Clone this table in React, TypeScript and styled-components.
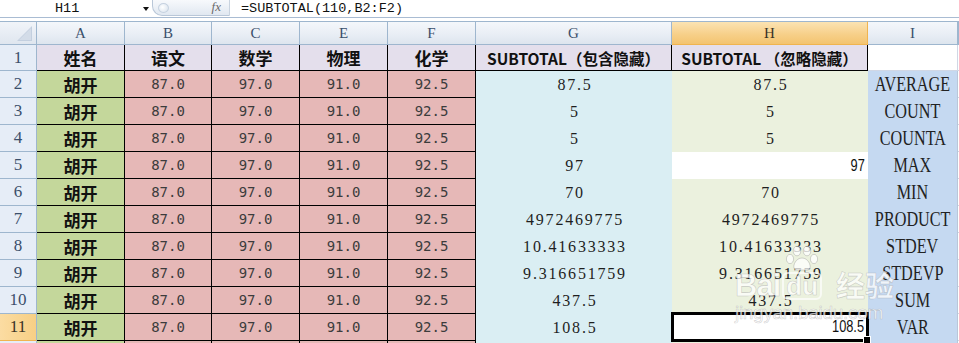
import React from "react"
import styled, { createGlobalStyle } from "styled-components"

const GlobalStyle = createGlobalStyle`
  html, body {
    margin: 0;
    padding: 0;
    background: #fff;
    overflow: hidden;
  }
  body {
    font-family: "Liberation Sans", Arial, sans-serif;
  }
`

const HEAD_BORDER = "#9eb6ce"
const CJK = `"Noto Sans CJK SC", "Noto Sans", sans-serif`
const SERIF = `"Liberation Serif", "Times New Roman", serif`

const Page = styled.div`
  position: relative;
  width: 959px;
  height: 343px;
  overflow: hidden;
  background: #fff;
`

// ---------- formula bar ----------
const FormulaBar = styled.div`
  display: flex;
  align-items: center;
  height: 17px;
  border-bottom: 1px solid #a9bcd3;
  font-family: "Liberation Mono", "Courier New", monospace;
  font-size: 13.5px;
  color: #111;
`

const NameBox = styled.div`
  display: flex;
  align-items: center;
  justify-content: space-between;
  width: 152px;
  padding-left: 55px;
  padding-right: 3px;
  box-sizing: border-box;
`

const Arrow = styled.span`
  width: 0;
  height: 0;
  border-left: 3.5px solid transparent;
  border-right: 3.5px solid transparent;
  border-top: 4px solid #111;
  margin-top: 1px;
`

const FxPill = styled.div`
  position: relative;
  display: flex;
  align-items: center;
  justify-content: flex-end;
  width: 78px;
  height: 17px;
  margin-top: -3px;
  padding-right: 8px;
  box-sizing: border-box;
  border: 1px solid #b9c7d8;
  border-right: 1px solid #c9d3df;
  border-radius: 0 0 0 10px;
  background: linear-gradient(#f7f9fc, #e1e8f1);
`

const Gloss = styled.span`
  position: absolute;
  left: 5px;
  top: 3px;
  width: 9px;
  height: 8px;
  border-radius: 50%;
  background: radial-gradient(circle at 40% 40%, #fff, #d6e0ec);
  border: 1px solid #c6d2e0;
`

const Fx = styled.span`
  font-family: ${SERIF};
  font-style: italic;
  font-size: 13px;
  color: #6a6a6a;
`

const Formula = styled.div`
  padding-left: 11px;
`

const Spacer = styled.div`
  height: 3px;
`

// ---------- sheet ----------
const Sheet = styled.div`
  display: grid;
  grid-template-columns: 37px 88px 87px 88px 88px 88px 196px 196px 90px 1fr;
  grid-template-rows: 24px 26px;
  grid-auto-rows: 27px;
`

const Corner = styled.div`
  display: flex;
  align-items: flex-end;
  justify-content: flex-end;
  padding: 0 4px 3px 0;
  box-sizing: border-box;
  background: linear-gradient(#f1f4f9, #dfe6ef);
  border-top: 1px solid ${HEAD_BORDER};
  border-right: 1px solid ${HEAD_BORDER};
  border-bottom: 1px solid ${HEAD_BORDER};
`

const ColHead = styled.div<{ $active?: boolean }>`
  display: flex;
  align-items: center;
  justify-content: center;
  box-sizing: border-box;
  border-top: 1px solid ${HEAD_BORDER};
  border-right: 1px solid ${(p) => (p.$active ? "#f0b44f" : HEAD_BORDER)};
  border-bottom: 1px solid ${(p) => (p.$active ? "#f0b44f" : HEAD_BORDER)};
  background: ${(p) =>
    p.$active
      ? "linear-gradient(#fbe3b3, #f7d08a 55%, #f3c470)"
      : "linear-gradient(#f4f7fb, #e9eef5 55%, #dde5ee)"};
  font-family: ${SERIF};
  font-size: 15px;
  color: ${(p) => (p.$active ? "#3a3326" : "#3b4f6b")};
`

const RowHead = styled.div<{ $active?: boolean }>`
  display: flex;
  align-items: center;
  justify-content: center;
  box-sizing: border-box;
  border-right: 1px solid ${HEAD_BORDER};
  border-bottom: 1px solid ${(p) => (p.$active ? "#f0b44f" : HEAD_BORDER)};
  background: ${(p) =>
    p.$active ? "linear-gradient(90deg, #fbdca2, #f7cf85)" : "#e6edf7"};
  font-family: ${SERIF};
  font-size: 17px;
  color: ${(p) => (p.$active ? "#3a3326" : "#3b4f6b")};
`

const TitleCell = styled.div<{ $small?: boolean }>`
  display: flex;
  align-items: center;
  justify-content: center;
  box-sizing: border-box;
  background: #e4dfec;
  border-right: 1px solid #000;
  border-bottom: 1px solid #000;
  font-family: ${CJK};
  font-weight: 700;
  font-size: ${(p) => (p.$small ? "15.5px" : "17px")};
  color: #111;
  white-space: nowrap;
`

const BlankCell = styled.div`
  box-sizing: border-box;
  background: #fff;
  border-right: 1px solid #d0d7e5;
  border-bottom: 1px solid #d0d7e5;
`

const NameCell = styled.div`
  display: flex;
  align-items: center;
  justify-content: center;
  box-sizing: border-box;
  background: #c4d79b;
  border-right: 1px solid #000;
  border-bottom: 1px solid #000;
  font-family: ${CJK};
  font-weight: 700;
  font-size: 17px;
  color: #111;
`

const ScoreCell = styled.div`
  display: flex;
  align-items: center;
  justify-content: center;
  box-sizing: border-box;
  background: #e6b8b7;
  border-right: 1px solid #000;
  border-bottom: 1px solid #000;
  font-family: "DejaVu Sans Mono", "Liberation Mono", monospace;
  font-size: 14px;
  color: #3c3c3c;
`

const ResultCell = styled.div<{ $bg: string; $right?: boolean }>`
  display: flex;
  align-items: center;
  justify-content: ${(p) => (p.$right ? "flex-end" : "center")};
  padding: ${(p) => (p.$right ? "0 3px 0 0" : "0 0 0 2px")};
  box-sizing: border-box;
  background: ${(p) => p.$bg};
  font-family: ${SERIF};
  font-size: 16px;
  letter-spacing: ${(p) => (p.$right ? "0" : "1.8px")};
  color: #1e1e1e;
`

const SelectedCell = styled.div`
  position: relative;
  display: flex;
  align-items: center;
  justify-content: flex-end;
  padding-right: 2px;
  margin-top: -1px;
  box-sizing: border-box;
  background: #fff;
  border: 2px solid #000;
  box-shadow: 0 0 0 1px #000;
  z-index: 1;
`

const FillHandle = styled.span`
  position: absolute;
  right: -5px;
  bottom: -5px;
  width: 6px;
  height: 6px;
  background: #000;
  border: 1px solid #fff;
`

const PlainNum = styled.span`
  display: inline-block;
  font-family: "Liberation Sans", Arial, sans-serif;
  font-size: 16px;
  color: #111;
  transform: scaleX(0.8);
  transform-origin: right center;
`

const FuncCell = styled.div`
  display: flex;
  align-items: center;
  justify-content: center;
  box-sizing: border-box;
  background: #c5d9f1;
  border-right: 1px solid #b9c6d8;
  overflow: hidden;
`

const FuncText = styled.span`
  display: inline-block;
  font-family: ${SERIF};
  font-size: 20px;
  color: #222;
  transform: scaleX(0.81);
  white-space: nowrap;
`

const EdgeCell = styled.div`
  border-bottom: 1px solid #d0d7e5;
`

// ---------- watermark ----------
const Watermark = styled.div`
  position: absolute;
  left: 735px;
  top: 246px;
  width: 175px;
  color: rgba(255, 255, 255, 0.72);
  font-family: "Liberation Sans", Arial, sans-serif;
  -webkit-text-stroke: 0.6px rgba(150, 150, 150, 0.45);
  pointer-events: none;
  z-index: 2;
`

const LogoLine = styled.div`
  display: flex;
  align-items: flex-end;
  gap: 2px;
`

const BaiText = styled.span`
  font-size: 31px;
  font-weight: 700;
  line-height: 28px;
  letter-spacing: -1px;
`

const PawBox = styled.span`
  display: flex;
  flex-direction: column;
  align-items: center;
`

const DuText = styled.span`
  font-size: 26px;
  font-weight: 700;
  line-height: 24px;
  padding: 0 2px;
  border: 2px solid rgba(255, 255, 255, 0.65);
  border-radius: 6px;
`

const JingText = styled.span`
  margin-left: 12px;
  font-family: ${CJK};
  font-size: 29px;
  font-weight: 700;
  line-height: 32px;
`

const SiteText = styled.div`
  margin-top: 3px;
  font-size: 19px;
  line-height: 20px;
  letter-spacing: -0.3px;
`

const scores = ["87.0", "97.0", "91.0", "92.5"]
const gValues = [
  "87.5",
  "5",
  "5",
  "97",
  "70",
  "4972469775",
  "10.41633333",
  "9.316651759",
  "437.5",
  "108.5",
]
const funcs = [
  "AVERAGE",
  "COUNT",
  "COUNTA",
  "MAX",
  "MIN",
  "PRODUCT",
  "STDEV",
  "STDEVP",
  "SUM",
  "VAR",
]
const columns = ["A", "B", "C", "E", "F", "G", "H", "I"]

function Paw() {
  return (
    <svg width="34" height="26" viewBox="0 0 34 26">
      <g fill="rgba(255,255,255,0.75)" stroke="rgba(150,150,150,0.5)" strokeWidth="0.8">
        <ellipse cx="5" cy="13" rx="3.6" ry="4.6" />
        <ellipse cx="12" cy="5" rx="3.8" ry="4.8" />
        <ellipse cx="22" cy="5" rx="3.8" ry="4.8" />
        <ellipse cx="29" cy="13" rx="3.6" ry="4.6" />
        <path d="M17 12 C11 12 8 19 9 22 C10 25 14 24 17 24 C20 24 24 25 25 22 C26 19 23 12 17 12 Z" />
      </g>
    </svg>
  )
}

function Row({ n }: { n: number }) {
  const i = n - 2
  const active = n === 11
  let hCell: React.ReactNode
  if (n === 5) {
    hCell = (
      <ResultCell $bg="#fff" $right>
        <PlainNum>97</PlainNum>
      </ResultCell>
    )
  } else if (n === 11) {
    hCell = (
      <SelectedCell>
        <PlainNum>108.5</PlainNum>
        <FillHandle />
      </SelectedCell>
    )
  } else {
    hCell = <ResultCell $bg="#ebf1de">{gValues[i]}</ResultCell>
  }

  return (
    <>
      <RowHead $active={active}>{n}</RowHead>
      <NameCell>胡开</NameCell>
      {scores.map((s, k) => (
        <ScoreCell key={k}>{s}</ScoreCell>
      ))}
      <ResultCell $bg="#daeef3">{gValues[i]}</ResultCell>
      {hCell}
      <FuncCell>
        <FuncText>{funcs[i]}</FuncText>
      </FuncCell>
      <EdgeCell />
    </>
  )
}

export default function App() {
  const rows = [2, 3, 4, 5, 6, 7, 8, 9, 10, 11]

  return (
    <Page>
      <GlobalStyle />
      <FormulaBar>
        <NameBox>
          <span>H11</span>
          <Arrow />
        </NameBox>
        <FxPill>
          <Gloss />
          <Fx>fx</Fx>
        </FxPill>
        <Formula>=SUBTOTAL(110,B2:F2)</Formula>
      </FormulaBar>
      <Spacer />

      <Sheet>
        <Corner>
          <svg width="15" height="15" viewBox="0 0 15 15">
            <path d="M15 0 L15 15 L0 15 Z" fill="#c3cfdf" />
            <path d="M14 2 L14 14 L2 14 Z" fill="#d3dce8" />
          </svg>
        </Corner>
        {columns.map((c) => (
          <ColHead key={c} $active={c === "H"}>
            {c}
          </ColHead>
        ))}
        <ColHead />

        <RowHead>1</RowHead>
        <TitleCell>姓名</TitleCell>
        <TitleCell>语文</TitleCell>
        <TitleCell>数学</TitleCell>
        <TitleCell>物理</TitleCell>
        <TitleCell>化学</TitleCell>
        <TitleCell $small>SUBTOTAL（包含隐藏）</TitleCell>
        <TitleCell $small>SUBTOTAL （忽略隐藏）</TitleCell>
        <BlankCell />
        <EdgeCell />

        {rows.map((n) => (
          <Row key={n} n={n} />
        ))}

        {/* next row, only its top edge is in view */}
        <RowHead />
        <NameCell />
        {scores.map((s, k) => (
          <ScoreCell key={k} />
        ))}
        <ResultCell $bg="#daeef3" />
        <ResultCell $bg="#ebf1de" />
        <FuncCell />
        <EdgeCell />
      </Sheet>

      <Watermark>
        <LogoLine>
          <BaiText>Bai</BaiText>
          <PawBox>
            <Paw />
            <DuText>du</DuText>
          </PawBox>
          <JingText>经验</JingText>
        </LogoLine>
        <SiteText>jingyan.baidu.com</SiteText>
      </Watermark>
    </Page>
  )
}
